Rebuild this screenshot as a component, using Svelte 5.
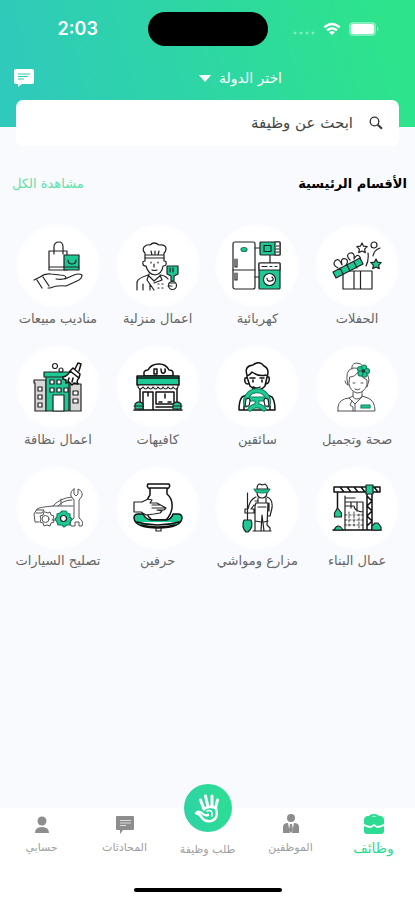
<script>
  const categories = [
    { id: 'gift', label: 'الحفلات' },
    { id: 'appliances', label: 'كهربائية' },
    { id: 'chef', label: 'اعمال منزلية' },
    { id: 'sales', label: 'مناديب مبيعات' },
    { id: 'beauty', label: 'صحة وتجميل' },
    { id: 'driver', label: 'سائقين' },
    { id: 'cafe', label: 'كافيهات' },
    { id: 'cleaning', label: 'اعمال نظافة' },
    { id: 'building', label: 'عمال البناء' },
    { id: 'farmer', label: 'مزارع ومواشي' },
    { id: 'potter', label: 'حرفين' },
    { id: 'car', label: 'تصليح السيارات' }
  ];
</script>

<div class="app" dir="rtl">
  <header>
    <div class="status" dir="ltr">
      <span class="time">2:03</span>
      <span class="island"></span>
      <span class="signals">
        <svg width="22" height="4" viewBox="0 0 22 4" fill="#fff" opacity=".4"><circle cx="2" cy="2" r="1.5"/><circle cx="8" cy="2" r="1.5"/><circle cx="14" cy="2" r="1.5"/><circle cx="20" cy="2" r="1.5"/></svg>
        <svg width="18" height="14" viewBox="0 0 20 14" fill="none" stroke="#fff" stroke-width="2.8"><path d="M1.5 5.200Q10-2.400 18.500 5.200M4.600 8.500Q10 3.700 15.400 8.500"/><path d="M10 13.800 6.800 10.500Q10 8 13.200 10.500Z" fill="#fff" stroke="none"/></svg>
        <svg width="30" height="14" viewBox="0 0 30 14"><rect x="0" y="0" width="27" height="14" rx="4" fill="#fff" opacity=".4"/><rect x="2" y="2" width="23" height="10" rx="3" fill="#fff"/><path d="M28 5v4q1.500-.5 1.500-2T28 5Z" fill="#fff" opacity=".5"/></svg>
      </span>
    </div>
    <div class="topbar">
      <span class="side"></span>
      <label class="country">
        <select aria-label="الدولة"><option>اختر الدولة</option></select>
        <svg width="12" height="7" viewBox="0 0 12 7"><path d="M0 0h12L6 7Z" fill="#fff"/></svg>
      </label>
      <span class="side end">
        <button class="chat" aria-label="الرسائل">
          <svg width="20" height="18" viewBox="0 0 20 18"><path d="M2 0h16q2 0 2 2v11q0 2-2 2H8l-4 3v-3H2q-2 0-2-2V2Q0 0 2 0Z" fill="#fff"/><path d="M4 5h12M4 7.500h10M4 10h6" stroke="#2fcdb2" stroke-width="1.100"/></svg>
        </button>
      </span>
    </div>
  </header>

  <label class="search">
    <svg width="14" height="14" viewBox="0 0 14 14" fill="none" stroke="#333"><circle cx="5.500" cy="5.500" r="4.300" stroke-width="1.300"/><path d="m8.700 8.700 4.300 4" stroke-width="2"/></svg>
    <input type="search" placeholder="ابحث عن وظيفة" aria-label="بحث" />
  </label>

  <main>
    <div class="heading">
      <h1>الأقسام الرئيسية</h1>
      <a href="#all">مشاهدة الكل</a>
    </div>

    <div class="grid">
      {#each categories as c (c.id)}
        <a class="category" href="#{c.id}">
          <span class="disc">
            <svg class="art" viewBox="-1 -1 50 50">
              {#if c.id === 'gift'}
                <path d="M10 29h29v18H10ZM21 29v18M27.500 29v18M5 26q-6-3-3-7 4-4 7 4-2-8 4-6 3 2 0 6M17 18q-5-5 0-7 5-1 4 6 3-6 6-2 1 4-3 5M35 11q1 7-2 13M47 6q-6 2-7 8"/>
                <path class="g" d="m0 30 27-14 3 6L3 36ZM7 26l3 6M14 23l3 6M21 20l3 6"/>
                <path d="m29 1 1.600 3.200 3.600.4-2.600 2.500.7 3.500L29 9l-3.300 1.600.7-3.500-2.600-2.500 3.600-.4Z"/>
                <circle cx="41" cy="3" r="3"/>
                <path class="g" d="m43 17 1.600 3.200 3.600.4-2.600 2.500.7 3.500L43 25l-3.300 1.600.7-3.500-2.600-2.500 3.600-.4Z"/>
              {:else if c.id === 'appliances'}
                <rect x="0" y="0" width="22" height="47" rx="2"/>
                <path d="M0 28h22M22 6h5M37 13v8M22 35h4M4 17v8H2v-8M4 31v7H2v-7"/>
                <ellipse class="gf" cx="11" cy="7.500" rx="3" ry="2"/>
                <rect class="g" x="27" y="0" width="20" height="13" rx="1"/>
                <rect class="w" x="42" y="0" width="5" height="13"/><rect x="31" y="3.500" width="7" height="6"/><path d="M43 4h3M43 7h3M43 10h3"/>
                <rect class="g" x="26" y="21" width="21" height="26" rx="1"/>
                <path class="w" d="M26 21h21v7H26ZM29 24.500h5M37 24.500h2M42 24.500h2"/>
                <circle class="w" cx="36.500" cy="37.500" r="6"/><path d="M34 36q0 4 4 3t1-4"/>
              {:else if c.id === 'chef'}
                <path d="M11 16v-5q-3-3-1-6 3-3 6-2 4-4 9 0 6-1 7 3 0 4-2 5v5ZM11 13h19M17 9l1 4M21 9v4M25 9l-1 4"/>
                <path d="M11 16v3q-3 0-2 3 0 2 3 2 2 8 9 9 7-1 8-9 4 0 3-4 0-1-2-1v-3M17 20v1M24 20v1M20 22v3M18 28q2 1 5 0M3 48v-8q1-4 11-7l6 6 7-6q5 1 7 4M15 32l-2 6 7 10M26 33l2 5-8 3M9 42v6M16 42v6M24 42h1M24 46h1M28 42h1M28 46h1"/>
                <path class="g" d="M33 24h11v8l-4 2v5h-3v-5l-4-2ZM36 26v4M39 26v4"/>
                <circle class="w" cx="38.500" cy="43.500" r="4"/><path d="M35 41h6M34 44h4"/>
              {:else if c.id === 'sales'}
                <path d="M15 9h18v19H15ZM15 25h15M20 12V5q0-5 5-5 4 0 4 5v7M0 38l6-3q5-4 11-3l9 1q6 0 6 3-3 2-10 1M31 37l9-4q5-2 8 0 0 4-5 6l-11 5q-9-1-16 2l-2 0M3 38l5 8M9 35l6 9"/>
                <path class="g" d="M30 13h15v15H30Z"/><path d="M30 25h15M34 18q0 4 4 4t4-4"/>
              {:else if c.id === 'beauty'}
                <g class="thin">
                  <path d="M19 6q-1-5 4-6 5 0 7 3M15 22q-4-15 5-17 15-1 16 12l-2 7M17 14q5 0 8-5 4 6 9 8v5q-3 8-10 8-7-2-8-9ZM15 22q-3-1-3-4M20 29v5q3 4 9 0v-5M5 48v-4q1-8 11-9l4-2M29 33l6 2q7 3 7 13H5M16 35l6 6 7-7M22 41v7M19 38l-2 4 3 2v4M20 20h2M28 20h2M22 26q3 2 5 0"/>
                </g>
                <g class="gf"><circle cx="27" cy="6" r="2.500"/><circle cx="31" cy="4.500" r="2.500"/><circle cx="34" cy="8" r="2.500"/><circle cx="31.500" cy="11.500" r="2.500"/><circle cx="27.500" cy="10.500" r="2.500"/></g>
                <circle cx="30.500" cy="8" r="1"/><rect class="gf" x="28" y="42" width="9" height="3"/>
              {:else if c.id === 'driver'}
                <path class="thick" d="M14 12Q11 3 20 2q6-5 11 1 6 3 3 11l-2 9q-7 8-15 0L14 14ZM14 13q3-1 5-4 7 5 14 3M14 15h-2q-1 6 3 6M34 14h2q1 6-3 7M17 15h5M27 15h4M20 17v2M29 17v2M20 24q4 2 7 0M20 26v3M28 26v3M18 30 9 34q-3 4-3 13h36q0-9-3-13l-9-4M11 43v4M37 43v4"/>
                <path d="M13 42a11.500 11 0 1 1 22 0M15 36h18M24 37v6M17 46q7-7 14 0" fill="#fff" stroke="#14805f" stroke-width="5"/>
                <path d="M13 42a11.500 11 0 1 1 22 0M15 36h18M24 37v6M17 46q7-7 14 0" fill="none" stroke="#1fc996" stroke-width="3"/>
                <path class="w" d="M13 36q4-2 4 2l-1 5h-4ZM35 36q-4-2-4 2l1 5h4Z"/>
              {:else if c.id === 'cafe'}
                <path class="thick" d="M10 13V9q1-2 4-2 3-6 11-6 7 0 10 6 4 0 4 3v3ZM20 6v5M20 6h3v5h-3M27 6q0 5 3 4 2-1 1-4M6 25v21M43 25v21M0 47h48M9 46V29h10v17M22 29h18v12H22ZM22 44h18M14 29v4M31 31v4M25 39h3M34 39h3"/>
                <path class="g thick" d="M3 13h42v9H3ZM3 15h42"/>
                <path class="w" d="M4 22v2q2 4 5 0 3 4 5 0 3 4 5 0 3 4 5 0 3 4 5 0 3 4 5 0 3 4 5 0 3 4 5 0v-2Z"/>
                <path class="g" d="M1 46v-5q4-4 8 0v5ZM39 46v-5q4-4 8 0v5ZM0 43h9M39 43h9"/>
              {:else if c.id === 'cleaning'}
                <path fill="#d8d8d8" d="M0 17h12v31H1V20H0ZM36 21h11v27H36Z"/>
                <path class="g" d="M12 14h-2V9h26v5h-1v34H12ZM12 14h23"/>
                <path class="w" d="M19 32h11v16H19ZM16 17h4v4h-4ZM23 17h4v4h-4ZM16 25h4v4h-4ZM23 25h4v4h-4ZM30 25h4v4h-4ZM4 24h4v4H4ZM4 32h4v4H4ZM4 40h4v4H4ZM39 28h5v4h-5ZM39 36h5v4h-5Z"/>
                <path class="w thick" d="M29 14q5-1 7-6l9 7q-3 3-1 6l-4-1-2 2-3-3-3 1v-3l-3-1ZM36 8l3-3 7 6-1 4M41 6l3-6 3 1-2 7M35 15l-1 3M39 15l-1 4"/>
                <circle cx="21" cy="3" r="2.500"/><circle class="w" cx="27" cy="7" r="2"/>
              {:else if c.id === 'building'}
                <path class="thick" d="M1 3h46v5H1ZM7 3l4 5M14 3l4 5M21 3l4 5M28 3l4 5M41 3l4 5M4.500 8v18M0 46h48M34 9v37h5V9M34 12l5 5-5 5 5 5-5 5 5 5-5 5"/>
                <path d="M12 46V12M12 14h10M12 18h18v28M12 22h9q0 5 9 6M18 18v6M24 18v9"/>
                <path stroke-dasharray="2 2" stroke-width=".8" d="M16 28v16M21 28v16M26 30v14M12 31h18M12 36h18M12 41h18"/>
                <path class="g" d="M33 1h7v9h-7ZM4.500 24l4 5v4h-7v-4ZM1 46q4-8 9 0ZM39 46v-4l3-3h3l3 4v3Z"/>
              {:else if c.id === 'farmer'}
                <path d="M24 8q0 6 5 6t5-6M23 13q-6 2-8 12h-3v4h9v-4h-3l3-4M34 13q6 2 5 11l-2 8h-2M25 14v5h8v-5M22 17h2M22 22v25h6l1-16 2 16h6v-3l-3-3 1-22H23ZM22 37l6 1M31 38l4-1M20 47h18M14.500 9v27M25 23h8M36 19v8"/>
                <path class="w" d="M24 5q0-5 3-5l2 1 3-1q2 1 3 5Z"/><path class="gf" d="M21 5q8 2 16 0l-2 3q-6 2-12 0Z"/><path class="g" d="M11 36h7q3 7-3 12h-2q-5-5-2-12Z"/>
              {:else if c.id === 'potter'}
                <path class="thick w" d="M14 0h21q2 3-2 5v5q6 5 5 14-1 7-6 12H18q-6-4-6-13 0-7 4-12V5q-4-2-2-5ZM16 4h17"/>
                <path class="w" d="M0 18h8l6-3 4 1-2 3h7l9 5-2 2h-7l5 1-2 2-6 1-8 1-5-3H0ZM18 21h8M18 24h12"/>
                <path class="thick g" d="M0 34q0-4 4-4h5q3 6 9 6h14q5 0 7-6h5q4 0 4 4-1 10-24 10T0 34ZM3 38q20 6 42 0M7 41q17 4 34 0"/>
                <path d="M22 44v3h5v-3"/>
              {:else}
                <g class="thin">
                  <path d="M5 38H1l-1-8 3-5q3-2 16-3 7-8 19-9M3 26h7l-2 3H2M19 22h20M24 22q5-6 14-6M27 15v6M18 36h5M36 38h3"/>
                  <circle cx="11.500" cy="35" r="3.500"/><path d="m11 28 3 1 2-1 1 3 3 1-1 3 1 3-3 1-1 3-3-1-3 1-1-3-3-1 1-3-1-3 3-1 1-3Z"/>
                  <path class="w" d="M40 5v5l2 2 2-2V5q5 2 4 7l-3 4v18q5 3 3 8h-3v-4h-4v4h-4q-2-5 3-8V16l-3-4q-1-5 3-7Z"/>
                </g>
                <path class="gf" d="m28 27 4 0 1 2 3 1v3l2 2-2 3v3l-3 0-3 2-2-2-4 0-1-3-2-3 2-2v-3l3-1Z"/><circle class="w" cx="29.500" cy="34.500" r="3"/>
              {/if}
            </svg>
          </span>
          <span class="name">{c.label}</span>
        </a>
      {/each}
    </div>
  </main>

  <nav>
    <a class="active" href="#jobs">
      <svg width="20" height="20" viewBox="0 0 20 20"><path d="M5 2q1-2 5-2t5 2h2q3 1 3 4v4q-4 2-7 2l-3-2-3 2q-3 0-7-2V6q0-3 3-4ZM7 2.500h6q-3-1.500-6 0ZM0 12q4 2 7 2l3-2 3 2q3 0 7-2v5q0 3-3 3H3q-3 0-3-3Z" fill="#2bdc92" fill-rule="evenodd"/></svg>
      <span>وظائف</span>
    </a>
    <a href="#staff">
      <svg width="16" height="20" viewBox="0 0 16 20" fill="#8d8d8d"><circle cx="8" cy="4" r="4"/><path d="M0 19v-6q0-4 5-4l2 10ZM16 19v-6q0-4-5-4L9 19ZM7 10h2l1 6-2 3-2-3Z"/></svg>
      <span>الموظفين</span>
    </a>
    <a class="request" href="#request">
      <span class="fab">
        <svg width="28" height="30" viewBox="0 0 28 30" fill="none" stroke="#fff" stroke-linecap="round" stroke-linejoin="round"><path d="M10 16 6.500 7M14 14 11.500 3M18 14V3M21.500 15l2-8" stroke-width="3"/><path d="M10 16q5-4 12-1 3 11-5 13-6 1-9-3-2-4-6-5 3-3 7 1 2 2 5 1" stroke-width="2.400"/><path d="M13 18q6-2 5 5" stroke-width="1.600"/></svg>
      </span>
      <span>طلب وظيفة</span>
    </a>
    <a href="#chats">
      <svg width="20" height="18" viewBox="0 0 20 18"><path d="M2 0h16q1 0 1 1v12q0 1-1 1H8l-3 4v-4H2q-1 0-1-1V1q0-1 1-1Z" fill="#8d8d8d"/><path d="M5 4.500h11M5 7h11M5 9.500h6" stroke="#ddd" stroke-width="1.100"/></svg>
      <span>المحادثات</span>
    </a>
    <a href="#account">
      <svg width="16" height="18" viewBox="0 0 16 18" fill="#8d8d8d"><circle cx="8" cy="5" r="4.500"/><path d="M1 17q0-6 7-6t7 6Z"/></svg>
      <span>حسابي</span>
    </a>
  </nav>
  <div class="home"><span></span></div>
</div>

<style>
  :global(body) { margin: 0; }
  .app {
    min-height: 100vh;
    display: flex;
    flex-direction: column;
    background: #f9fafe;
    font-family: "DejaVu Sans", sans-serif;
    box-sizing: border-box;
  }
  a { color: inherit; text-decoration: none; }
  svg { display: block; flex: none; }
  header {
    height: 127px;
    background: linear-gradient(75deg, #2fcabb 5%, #2ed5a6 45%, #2de38c 90%);
  }
  .status {
    display: grid;
    grid-template-columns: 1fr 120px 1fr;
    align-items: center;
    padding-top: 12px;
    color: #fff;
  }
  .time { font: 600 18px/24px Inter, sans-serif; padding-left: 8px; text-align: center; }
  .island { height: 34px; border-radius: 17px; background: #000; }
  .signals { display: flex; align-items: center; justify-content: flex-end; gap: 8px; padding-right: 36px; }
  .signals svg:first-child { margin-top: 8px; }
  .topbar {
    display: flex;
    align-items: center;
    height: 32px;
    margin-top: 16px;
  }
  .side { flex: 1; }
  .side.end { display: flex; justify-content: flex-end; flex: 1 0 52px; padding-left: 14px; }
  .country { display: flex; align-items: center; gap: 8px; }
  select {
    appearance: none;
    border: 0;
    padding: 0;
    background: none;
    color: #fff;
    font: 14px/24px "DejaVu Sans", sans-serif;
  }
  option { color: #222; }
  .chat { border: 0; padding: 0; background: none; }
  .search {
    position: relative;
    display: flex;
    align-items: center;
    gap: 16px;
    height: 46px;
    margin: -27px 16px 0;
    padding: 0 16px;
    border-radius: 7px;
    background: #fff;
  }
  input {
    flex: 1;
    min-width: 0;
    border: 0;
    padding: 0;
    outline: 0;
    background: none;
    color: #333;
    font: 15px/24px "DejaVu Sans", sans-serif;
  }
  input::placeholder { color: #444; opacity: 1; }
  main { flex: 1; padding: 26px 8px 24px; }
  .heading { display: flex; justify-content: space-between; align-items: center; padding-left: 4px; }
  h1 { margin: 0; font-size: 13px; line-height: 24px; color: #000; }
  .heading a { font-size: 13px; line-height: 24px; color: #5fe0a8; }
  .grid {
    display: grid;
    grid-template-columns: repeat(4, 1fr);
    row-gap: 15px;
    margin-top: 28px;
  }
  .category { display: flex; flex-direction: column; align-items: center; }
  .disc {
    display: grid;
    place-items: center;
    width: 84px;
    height: 84px;
    border-radius: 50%;
    background: radial-gradient(closest-side, #fff 88%, #fcfdff 100%);
  }
  .art { width: 50px; height: 50px; fill: none; stroke: #222; stroke-width: 1.2; stroke-linejoin: round; stroke-linecap: round; }
  .art .g { fill: #1fc996; }
  .art .gf { fill: #1fc996; stroke: #14805f; }
  .art .w { fill: #fff; }
  .art .thin { stroke: #555; stroke-width: 1; }
  .art .thick { stroke-width: 1.5; stroke: #111; }
  .name { font-size: 13px; line-height: 22px; color: #666; white-space: nowrap; }
  nav { display: flex; height: 64px; background: #fff; }
  nav a {
    flex: 1;
    display: flex;
    flex-direction: column;
    align-items: center;
    justify-content: flex-end;
    gap: 4px;
    padding-bottom: 14px;
    font-size: 11px;
    line-height: 20px;
    color: #a0a0a0;
    white-space: nowrap;
  }
  nav .active { font-size: 14px; color: #2bdc92; }
  nav .request { gap: 8px; padding-bottom: 12px; }
  .fab {
    display: grid;
    place-items: center;
    flex: none;
    width: 48px;
    height: 48px;
    border-radius: 50%;
    background: linear-gradient(75deg, #2ed2a8, #2ddf90);
  }
  .home { display: flex; justify-content: center; padding: 16px 0 8px; background: #fff; }
  .home span { width: 148px; height: 4px; border-radius: 2px; background: #000; }
</style>
